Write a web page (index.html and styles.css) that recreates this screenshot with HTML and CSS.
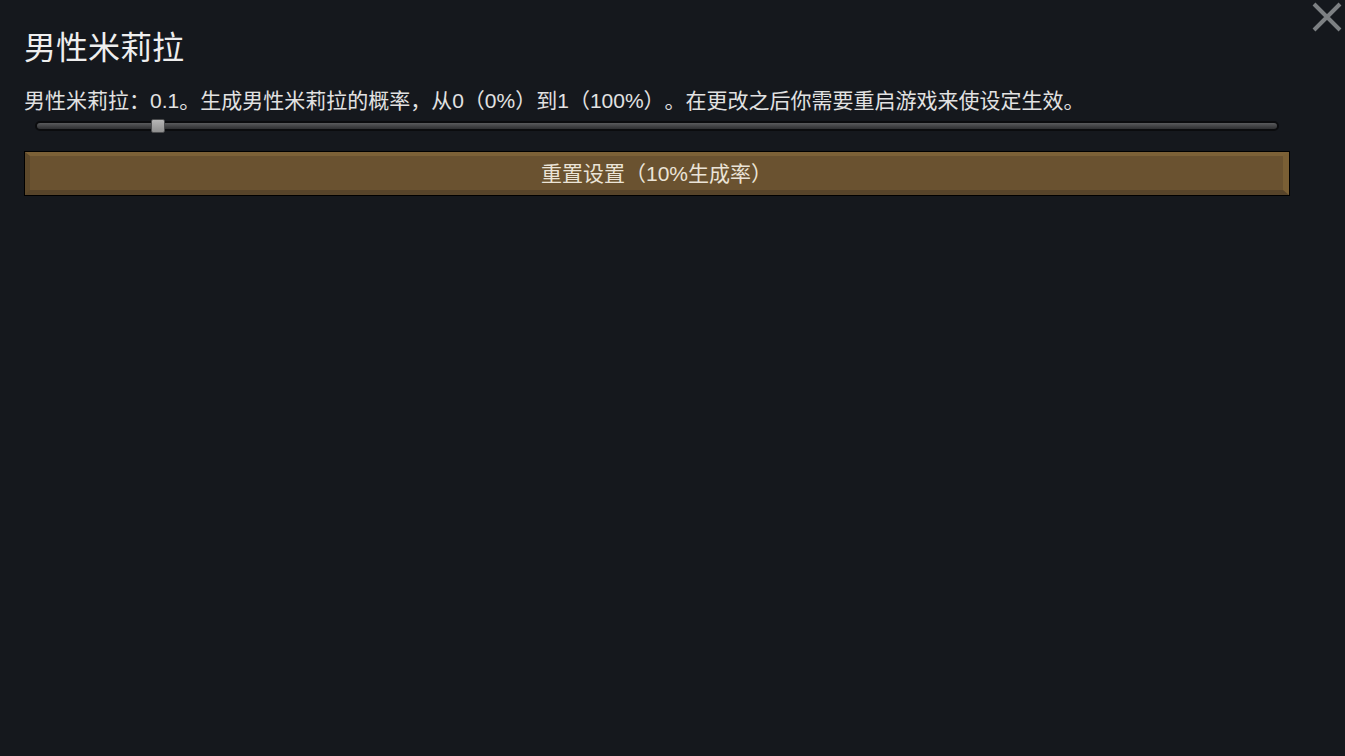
FILE: index.html
```html
<!DOCTYPE html>
<html lang="zh-CN">
<head>
<meta charset="utf-8">
<title>男性米莉拉</title>
<link rel="stylesheet" href="styles.css">
</head>
<body>
<div class="dialog">
  <button class="close" aria-label="关闭">
    <svg width="30" height="30" viewBox="0 0 30 30">
      <path d="M2 2 L28 28 M28 2 L2 28" stroke="#7d8083" stroke-width="4" fill="none"/>
    </svg>
  </button>
  <h1 class="title">男性米莉拉</h1>
  <p class="desc">男性米莉拉：0.1。生成男性米莉拉的概率，从0（0%）到1（100%）。在更改之后你需要重启游戏来使设定生效。</p>
  <div class="slider">
    <div class="track"></div>
    <div class="thumb" style="left: 116px"></div>
  </div>
  <button class="reset">重置设置（10%生成率）</button>
</div>
</body>
</html>
```
FILE: styles.css
```css
html, body {
  margin: 0;
  height: 100%;
  background: #15181d;
}

body {
  font-family: "Liberation Sans", "Noto Sans CJK SC", sans-serif;
  color: #e6e6e6;
  text-spacing-trim: space-all;
}

.dialog {
  position: relative;
  padding: 26px 55px 0 24px;
  height: 100%;
  box-sizing: border-box;
}

.close {
  position: absolute;
  top: 2px;
  right: 3px;
  width: 30px;
  height: 30px;
  padding: 0;
  border: 0;
  background: none;
}

.close svg {
  display: block;
}

.title {
  margin: 0;
  font-size: 32px;
  font-weight: 400;
  line-height: 44px;
  color: #eeeeee;
}

.desc {
  margin: 17px 0 0;
  font-size: 21px;
  line-height: 28px;
  color: #e2e2e2;
  white-space: nowrap;
}

.slider {
  position: relative;
  height: 20px;
  margin: 1px 11px 0;
  width: 1244px;
}

.track {
  position: absolute;
  left: 0;
  right: 0;
  top: 5px;
  height: 10px;
  box-sizing: border-box;
  border-radius: 5px;
  border: 2px solid #0b0c0e;
  background: linear-gradient(#5a5b5d, #3f4042 60%, #2f3032);
}

.thumb {
  position: absolute;
  top: 3px;
  width: 14px;
  height: 14px;
  box-sizing: border-box;
  border: 1px solid #4b4c4e;
  border-radius: 2px;
  background: linear-gradient(#b6b6b6, #8e8e8e);
}

.reset {
  display: block;
  box-sizing: border-box;
  width: 1264px;
  height: 43px;
  margin: 16px 0 0 1px;
  padding: 0;
  border-style: solid;
  border-width: 4px 6px 5px 5px;
  border-color: #7c6137 #7a5f35 #57442a #5c482b;
  box-shadow: 0 0 0 1px #000;
  background: #6a5230;
  font-family: "Liberation Sans", "Noto Sans CJK SC", sans-serif;
  font-size: 21px;
  color: #ebe4d7;
  line-height: 35px;
}
```
